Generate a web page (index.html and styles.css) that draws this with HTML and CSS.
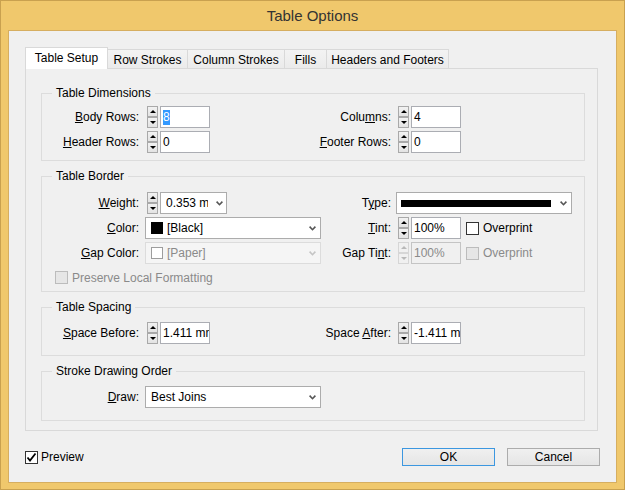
FILE: index.html
```html
<!DOCTYPE html>
<html>
<head>
<meta charset="utf-8">
<title>Table Options</title>
<link rel="stylesheet" href="styles.css">
</head>
<body>
<div class="window">
  <div class="titlebar">Table Options</div>
  <div class="client">
    <div class="tabs">
      <div class="tab tab-active t1">Table Setup</div>
      <div class="tab t2">Row Strokes</div>
      <div class="tab t3">Column Strokes</div>
      <div class="tab t4">Fills</div>
      <div class="tab t5">Headers and Footers</div>
    </div>
    <div class="panel">
      <fieldset class="group g1">
        <legend>Table Dimensions</legend>
        <div class="row">
          <span class="lbl"><u>B</u>ody Rows:</span>
          <div class="ctl">
            <div class="spin"><div class="sb up"></div><div class="sb down"></div></div>
            <div class="field"><span class="sel">8</span></div>
          </div>
          <span class="lbl2">Colu<u>m</u>ns:</span>
          <div class="ctl2">
            <div class="spin"><div class="sb up"></div><div class="sb down"></div></div>
            <div class="field">4</div>
          </div>
        </div>
        <div class="row">
          <span class="lbl"><u>H</u>eader Rows:</span>
          <div class="ctl">
            <div class="spin"><div class="sb up"></div><div class="sb down"></div></div>
            <div class="field">0</div>
          </div>
          <span class="lbl2"><u>F</u>ooter Rows:</span>
          <div class="ctl2">
            <div class="spin"><div class="sb up"></div><div class="sb down"></div></div>
            <div class="field">0</div>
          </div>
        </div>
      </fieldset>

      <fieldset class="group g2">
        <legend>Table Border</legend>
        <div class="row">
          <span class="lbl"><u>W</u>eight:</span>
          <div class="ctl">
            <div class="spin"><div class="sb up"></div><div class="sb down"></div></div>
            <div class="dd dd-weight">
              <span class="dd-text">0.353 mm</span>
              <svg class="chev" width="7" height="5" viewBox="0 0 7 5"><polyline points="0.6,0.6 3.5,3.7 6.4,0.6" fill="none" stroke="#555" stroke-width="1.6"/></svg>
            </div>
          </div>
          <span class="lbl2">T<u>y</u>pe:</span>
          <div class="ctl2">
            <div class="dd dd-type">
              <span class="dd-text"><span class="linebar"></span></span>
              <svg class="chev" width="7" height="5" viewBox="0 0 7 5"><polyline points="0.6,0.6 3.5,3.7 6.4,0.6" fill="none" stroke="#555" stroke-width="1.6"/></svg>
            </div>
          </div>
        </div>
        <div class="row">
          <span class="lbl"><u>C</u>olor:</span>
          <div class="ctl">
            <div class="dd dd-wide">
              <span class="swatch swatch-black"></span>
              <span class="dd-text">[Black]</span>
              <svg class="chev" width="7" height="5" viewBox="0 0 7 5"><polyline points="0.6,0.6 3.5,3.7 6.4,0.6" fill="none" stroke="#555" stroke-width="1.6"/></svg>
            </div>
          </div>
          <span class="lbl2"><u>T</u>int:</span>
          <div class="ctl2">
            <div class="spin"><div class="sb up"></div><div class="sb down"></div></div>
            <div class="field">100%</div>
            <span class="cb cb-gap"></span>
            <span class="cb-text">Overprint</span>
          </div>
        </div>
        <div class="row">
          <span class="lbl"><u>G</u>ap Color:</span>
          <div class="ctl">
            <div class="dd dd-wide dd-dis">
              <span class="swatch swatch-paper"></span>
              <span class="dd-text">[Paper]</span>
              <svg class="chev" width="7" height="5" viewBox="0 0 7 5"><polyline points="0.6,0.6 3.5,3.7 6.4,0.6" fill="none" stroke="#c4c4c4" stroke-width="1.6"/></svg>
            </div>
          </div>
          <span class="lbl2">Gap Ti<u>n</u>t:</span>
          <div class="ctl2">
            <div class="spin spin-dis"><div class="sb up"></div><div class="sb down"></div></div>
            <div class="field field-dis">100%</div>
            <span class="cb cb-gap cb-dis"></span>
            <span class="cb-text dis">Overprint</span>
          </div>
        </div>
        <div class="row row-check">
          <span class="cb cb-dis"></span>
          <span class="cb-text dis">Preserve Local Formatting</span>
        </div>
      </fieldset>

      <fieldset class="group g3">
        <legend>Table Spacing</legend>
        <div class="row">
          <span class="lbl"><u>S</u>pace Before:</span>
          <div class="ctl">
            <div class="spin"><div class="sb up"></div><div class="sb down"></div></div>
            <div class="field">1.411 mm</div>
          </div>
          <span class="lbl2">Space <u>A</u>fter:</span>
          <div class="ctl2">
            <div class="spin"><div class="sb up"></div><div class="sb down"></div></div>
            <div class="field">-1.411 mm</div>
          </div>
        </div>
      </fieldset>

      <fieldset class="group g4">
        <legend>Stroke Drawing Order</legend>
        <div class="row">
          <span class="lbl"><u>D</u>raw:</span>
          <div class="ctl">
            <div class="dd dd-wide">
              <span class="dd-text dd-plain">Best Joins</span>
              <svg class="chev" width="7" height="5" viewBox="0 0 7 5"><polyline points="0.6,0.6 3.5,3.7 6.4,0.6" fill="none" stroke="#555" stroke-width="1.6"/></svg>
            </div>
          </div>
        </div>
      </fieldset>
    </div>

    <div class="footer">
      <label class="preview">
        <span class="cb cb-checked">
          <svg width="11" height="11" viewBox="0 0 11 11"><polyline points="1.5,5.5 4,8.5 9.5,1.5" fill="none" stroke="#000" stroke-width="1.8"/></svg>
        </span>
        <span>Preview</span>
      </label>
      <div class="btn btn-ok">OK</div>
      <div class="btn">Cancel</div>
    </div>
  </div>
</div>
</body>
</html>
```
FILE: styles.css
```css
* { box-sizing: border-box; }

body {
  margin: 0;
  font-family: "Liberation Sans", Arial, sans-serif;
  font-size: 12px;
  color: #000;
  background: #f0c86c;
}

.window {
  width: 625px;
  height: 490px;
  border: 1px solid #c9a14f;
  background: #f0c86c;
  padding: 0 7px 6px;
  display: flex;
  flex-direction: column;
}

.titlebar {
  height: 29px;
  line-height: 29px;
  text-align: center;
  font-size: 15px;
  color: #333;
}

.client {
  flex: 1;
  border: 1px solid #d6ae60;
  background: #f0f0f0;
  padding: 16px 18px 0 16px;
  display: flex;
  flex-direction: column;
}

/* Tabs */
.tabs {
  display: flex;
  align-items: flex-end;
  height: 21px;
  position: relative;
  z-index: 1;
}

.tab {
  height: 19px;
  border: 1px solid #d9d9d9;
  border-bottom: 0;
  background: linear-gradient(#f3f3f3, #ebebeb);
  margin-left: -1px;
  display: flex;
  align-items: center;
  justify-content: center;
  white-space: nowrap;
  padding-top: 1px;
}

.tab-active {
  height: 22px;
  margin-left: 0;
  margin-bottom: -1px;
  background: #fff;
  padding-top: 0;
  padding-bottom: 2px;
}

.t1 { width: 83px; }
.t2 { width: 81px; }
.t3 { width: 98px; }
.t4 { width: 43px; }
.t5 { width: 123px; }

.panel {
  border: 1px solid #d9d9d9;
  background: #f0f0f0;
  padding: 17px 12px 9px 15px;
}

/* Groups */
.group {
  margin: 0;
  padding: 0 13px 0 0;
  border: 1px solid #dcdcdc;
  min-width: 0;
}

.group legend {
  margin-left: 10px;
  padding: 0 4px;
  height: 14px;
  line-height: 14px;
}

.g1 { padding-top: 6px; padding-bottom: 7px; }
.g2 { margin-top: 8px; padding-top: 9px; padding-bottom: 7px; }
.g3 { margin-top: 8px; padding-top: 8px; padding-bottom: 11px; }
.g4 { margin-top: 8px; padding-top: 8px; padding-bottom: 12px; }

.row {
  display: flex;
  align-items: center;
  height: 22px;
}

.row + .row { margin-top: 3px; }

.row-check {
  height: 13px;
  padding-left: 13px;
}

.row + .row-check { margin-top: 7px; }

.lbl {
  flex: none;
  width: 97px;
  margin-right: 6px;
  text-align: right;
  white-space: nowrap;
}

.lbl2 {
  flex: 1;
  min-width: 0;
  margin-right: 5px;
  text-align: right;
  white-space: nowrap;
}

.ctl {
  flex: none;
  display: flex;
  align-items: center;
}

.ctl2 {
  flex: none;
  width: 175px;
  display: flex;
  align-items: center;
}

u { text-underline-offset: 1px; }

/* Spinner */
.spin {
  flex: none;
  width: 11px;
  height: 22px;
  margin: 0 2px;
  display: flex;
  flex-direction: column;
}

.sb {
  height: 11px;
  border: 1px solid #a9a9a9;
  background: linear-gradient(#f2f2f2, #e3e3e3);
  display: flex;
  align-items: center;
  justify-content: center;
}

.sb::before {
  content: "";
  width: 0;
  height: 0;
  border-left: 3px solid transparent;
  border-right: 3px solid transparent;
}

.up::before { border-bottom: 3px solid #000; }
.down::before { border-top: 3px solid #000; }

.spin-dis .sb {
  border-color: #d6d6d6;
  background: #f0f0f0;
}

.spin-dis .up::before { border-bottom-color: #b8b8b8; }
.spin-dis .down::before { border-top-color: #b8b8b8; }

/* Text field */
.field {
  flex: none;
  width: 50px;
  height: 22px;
  border: 1px solid #abadb3;
  background: #fff;
  padding: 0 2px;
  display: flex;
  align-items: center;
  overflow: hidden;
  white-space: nowrap;
}

.field-dis {
  border-color: #c4c4c4;
  background: #f0f0f0;
  color: #8a8a8a;
}

.sel {
  background: #3399ff;
  color: #fff;
  line-height: 15px;
}

/* Dropdown */
.dd {
  flex: none;
  height: 22px;
  border: 1px solid #acacac;
  background: #fff;
  padding: 0 4px;
  display: flex;
  align-items: center;
}

.dd-text {
  flex: 1;
  min-width: 0;
  overflow: hidden;
  white-space: nowrap;
}

.dd-weight { width: 67px; }
.dd-weight .dd-text { flex: none; width: 42px; margin-left: 1px; margin-right: 8px; }

.dd-wide { width: 176px; }
.dd-type { width: 176px; }
.dd-plain { padding-left: 1px; }

.chev { flex: none; display: block; }

.linebar {
  display: block;
  width: 150px;
  height: 7px;
  background: #000;
}

.dd-dis {
  border-color: #dcdcdc;
  background: #f5f5f5;
  color: #8a8a8a;
}

.swatch {
  flex: none;
  width: 12px;
  height: 12px;
  margin-left: 1px;
  margin-right: 4px;
}

.swatch-black { background: #000; }
.swatch-paper { background: #fff; border: 1px solid #9d9d9d; }

/* Checkbox */
.cb {
  flex: none;
  width: 13px;
  height: 13px;
  border: 1px solid #333;
  background: #fff;
  display: flex;
  align-items: center;
  justify-content: center;
}

.cb-gap { margin-left: 5px; }

.cb-dis {
  border-color: #bcbcbc;
  background: #e6e6e6;
}

.cb-text {
  margin-left: 4px;
  white-space: nowrap;
}

.dis { color: #8a8a8a; }

/* Footer */
.footer {
  display: flex;
  align-items: center;
  height: 18px;
  margin-top: 17px;
  margin-right: -2px;
}

.preview {
  display: flex;
  align-items: center;
  gap: 3px;
}

.btn {
  flex: none;
  width: 93px;
  height: 18px;
  border: 1px solid #acacac;
  background: linear-gradient(#f0f0f0, #e5e5e5);
  display: flex;
  align-items: center;
  justify-content: center;
}

.btn-ok {
  margin-left: auto;
  margin-right: 12px;
  border-color: #3c97e0;
}
```
